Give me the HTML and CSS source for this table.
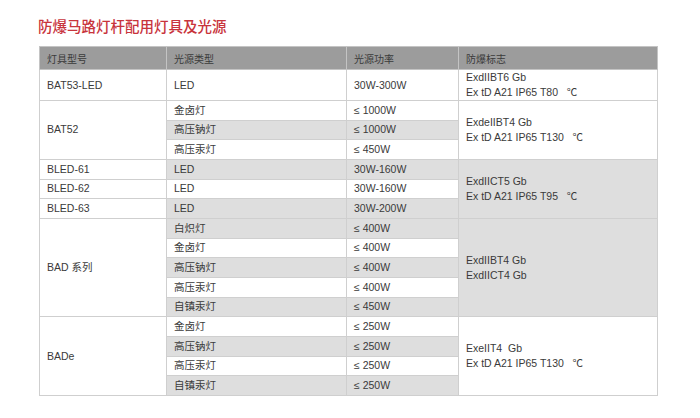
FILE: index.html
```html
<!DOCTYPE html>
<html lang="zh">
<head>
<meta charset="utf-8">
<link rel="stylesheet" href="styles.css">
</head>
<body>
<div class="page">
  <h1 class="title">防爆马路灯杆配用灯具及光源</h1>
  <table class="spec">
    <colgroup>
      <col class="c1"><col class="c2"><col class="c3"><col class="c4">
    </colgroup>
    <thead>
      <tr class="head"><th>灯具型号</th><th>光源类型</th><th>光源功率</th><th>防爆标志</th></tr>
    </thead>
    <tbody>
      <tr class="tall">
        <td>BAT53-LED</td><td>LED</td><td>30W-300W</td>
        <td class="mark">ExdIIBT6 Gb<br>Ex tD A21 IP65 T80 &nbsp; ℃</td>
      </tr>
      <tr><td rowspan="3">BAT52</td><td>金卤灯</td><td>≤ 1000W</td>
        <td rowspan="3" class="mark">ExdeIIBT4 Gb<br>Ex tD A21 IP65 T130 &nbsp; ℃</td></tr>
      <tr class="g"><td>高压钠灯</td><td>≤ 1000W</td></tr>
      <tr><td>高压汞灯</td><td>≤ 450W</td></tr>
      <tr class="g"><td class="w">BLED-61</td><td>LED</td><td>30W-160W</td>
        <td rowspan="3" class="mark">ExdIICT5 Gb<br>Ex tD A21 IP65 T95 &nbsp; ℃</td></tr>
      <tr><td>BLED-62</td><td>LED</td><td>30W-160W</td></tr>
      <tr class="g"><td class="w">BLED-63</td><td>LED</td><td>30W-200W</td></tr>
      <tr class="g"><td rowspan="5" class="w">BAD 系列</td><td>白炽灯</td><td>≤ 400W</td>
        <td rowspan="5" class="mark">ExdIIBT4 Gb<br>ExdIICT4 Gb</td></tr>
      <tr><td>金卤灯</td><td>≤ 400W</td></tr>
      <tr class="g"><td>高压钠灯</td><td>≤ 400W</td></tr>
      <tr><td>高压汞灯</td><td>≤ 400W</td></tr>
      <tr class="g"><td>自镇汞灯</td><td>≤ 450W</td></tr>
      <tr><td rowspan="4">BADe</td><td>金卤灯</td><td>≤ 250W</td>
        <td rowspan="4" class="mark">ExeIIT4 &nbsp;Gb<br>Ex tD A21 IP65 T130 &nbsp; ℃</td></tr>
      <tr class="g"><td>高压钠灯</td><td>≤ 250W</td></tr>
      <tr><td>高压汞灯</td><td>≤ 250W</td></tr>
      <tr class="g"><td>自镇汞灯</td><td>≤ 250W</td></tr>
    </tbody>
  </table>
</div>
</body>
</html>
```
FILE: styles.css
```css
html, body {
  margin: 0;
  padding: 0;
  background: #ffffff;
}

.page {
  padding: 16px 0 0 39px;
  font-family: "Liberation Sans", Arial, "Noto Sans CJK SC", sans-serif;
  color: #3a3a3a;
}

.title {
  margin: 0 0 10px -1px;
  font-family: "Noto Sans CJK SC", sans-serif;
  font-size: 14.5px;
  line-height: 20px;
  font-weight: 500;
  color: #c8343c;
}

.spec {
  border-collapse: collapse;
  table-layout: fixed;
  width: 618px;
  font-size: 10.5px;
  border: 1px solid #cfcfcf;
}

.c1 { width: 127px; }
.c2 { width: 180px; }
.c3 { width: 112px; }
.c4 { width: 199px; }

.spec th,
.spec td {
  border: 1px solid #cfcfcf;
  padding: 0 0 0 7px;
  text-align: left;
  vertical-align: middle;
  line-height: 15px;
  white-space: nowrap;
}

.spec th {
  background: #9c9c9c;
  color: #3a3a3a;
  font-weight: normal;
  font-family: "Noto Sans CJK SC", sans-serif;
  font-size: 10px;
  border-color: #c4c4c4;
}

.head { height: 23px; }
.tall { height: 29px; }
.spec tbody tr { height: 19.67px; }
.spec tbody tr.tall { height: 29px; }

.spec tr.g td { background: #dedede; }
.spec tr.g td.w { background: #ffffff; }

.spec td.mark { line-height: 15px; }
.spec tr.g td.mark { background: #dedede; }
.spec tbody tr:nth-child(8) td.mark { background: #dedede; }
```
